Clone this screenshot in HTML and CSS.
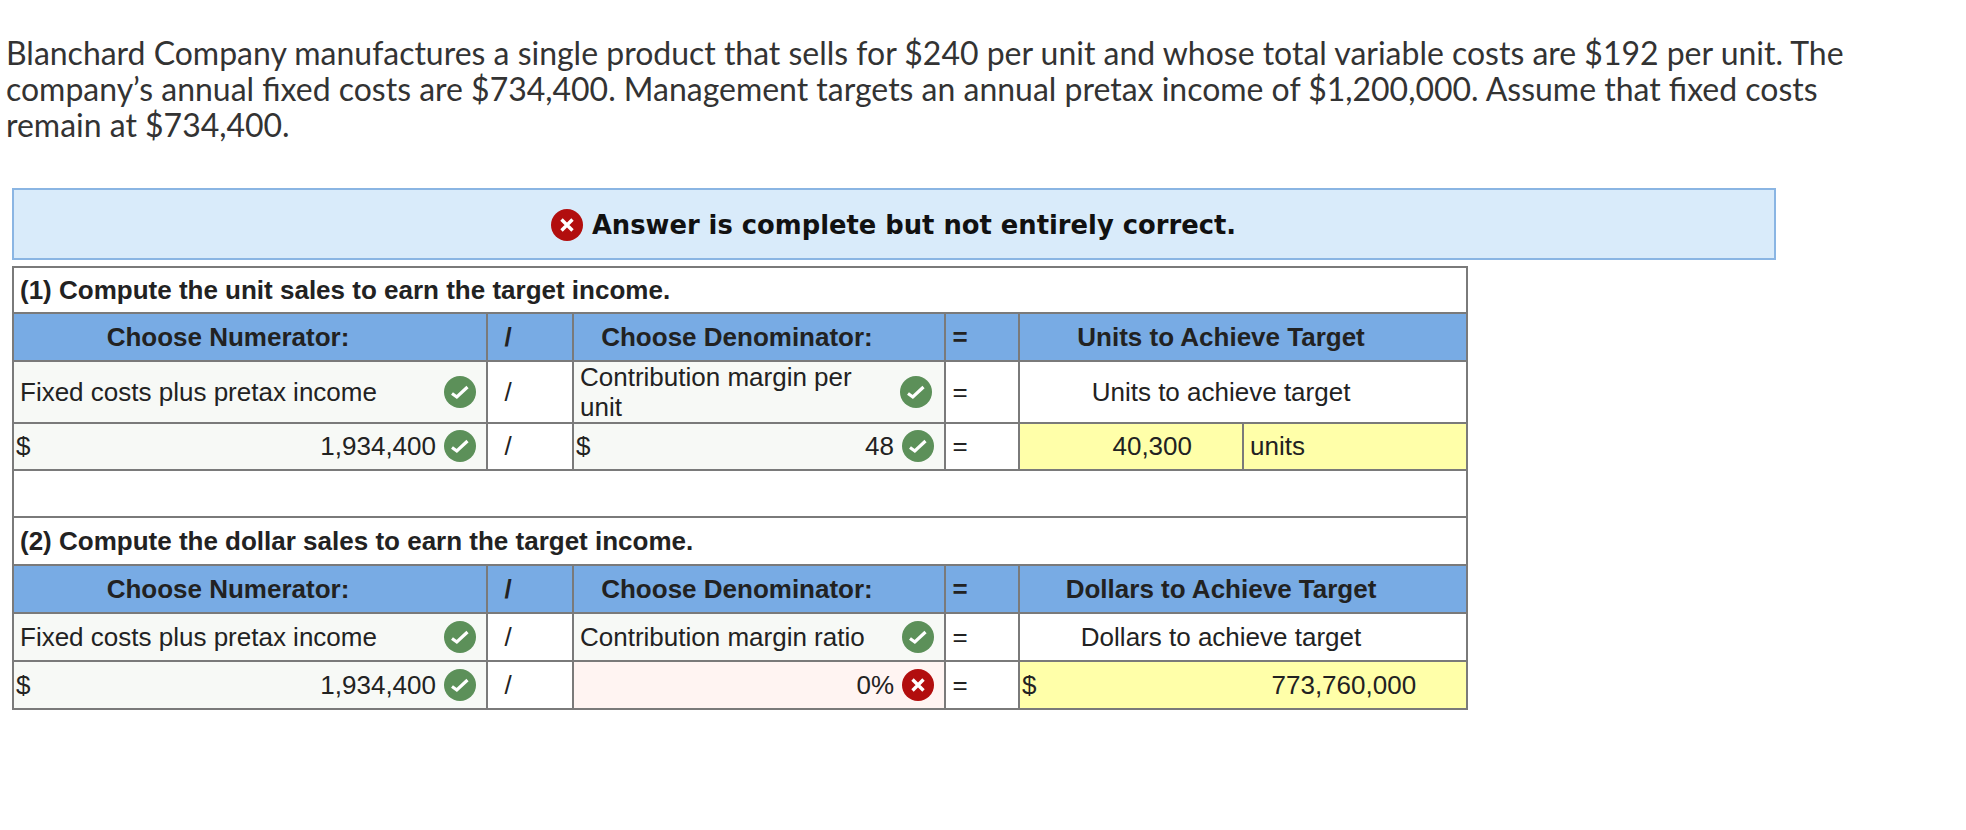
FILE: index.html
```html
<!DOCTYPE html>
<html lang="en">
<head>
<meta charset="utf-8">
<title>Blanchard Company</title>
<link rel="stylesheet" href="styles.css">
</head>
<body>
<svg class="defs" width="0" height="0" aria-hidden="true">
  <symbol id="ok" viewBox="0 0 32 32"><circle cx="16" cy="16" r="16" fill="#5c9059"/><path d="M8 17.500L12.800 21L23.500 11" fill="none" stroke="#fff" stroke-width="3.200"/></symbol>
  <symbol id="bad" viewBox="0 0 32 32"><circle cx="16" cy="16" r="16" fill="#b20e0e"/><path d="M10.500 10.500l11 11M21.500 10.500l-11 11" fill="none" stroke="#fff" stroke-width="3.400"/></symbol>
</svg>
<p class="intro">Blanchard Company manufactures a single product that sells for $240 per unit and whose total variable costs are $192 per unit. The company’s annual fixed costs are $734,400. Management targets an annual pretax income of $1,200,000. Assume that fixed costs remain at $734,400.</p>
<div class="banner"><svg class="icon"><use href="#bad"/></svg><strong>Answer is complete but not entirely correct.</strong></div>
<table class="sheet">
  <colgroup>
    <col class="c-num"><col class="c-op1"><col class="c-den"><col class="c-op2"><col class="c-val"><col class="c-unit">
  </colgroup>
  <tbody>
    <tr class="r-title"><th colspan="6" class="title">(1) Compute the unit sales to earn the target income.</th></tr>
    <tr class="r-head">
      <th class="mid">Choose Numerator:</th><th class="mid">/</th><th class="mid">Choose Denominator:</th><th class="mid">=</th><th colspan="2" class="mid">Units to Achieve Target</th>
    </tr>
    <tr class="r-tall">
      <td class="given"><div class="fill"><span>Fixed costs plus pretax income</span><svg class="icon"><use href="#ok"/></svg></div></td>
      <td class="mid">/</td>
      <td class="given"><div class="fill"><span class="wrap">Contribution margin per unit</span><svg class="icon"><use href="#ok"/></svg></div></td>
      <td class="mid">=</td>
      <td colspan="2" class="mid">Units to achieve target</td>
    </tr>
    <tr class="r-row">
      <td class="given dollar"><div class="fill"><span>$</span><span class="amount">1,934,400</span><svg class="icon"><use href="#ok"/></svg></div></td>
      <td class="mid">/</td>
      <td class="given dollar"><div class="fill"><span>$</span><span class="amount">48</span><svg class="icon"><use href="#ok"/></svg></div></td>
      <td class="mid">=</td>
      <td class="answer num">40,300</td>
      <td class="answer">units</td>
    </tr>
    <tr class="r-gap"><td colspan="6"></td></tr>
    <tr class="r-title2"><th colspan="6" class="title">(2) Compute the dollar sales to earn the target income.</th></tr>
    <tr class="r-head">
      <th class="mid">Choose Numerator:</th><th class="mid">/</th><th class="mid">Choose Denominator:</th><th class="mid">=</th><th colspan="2" class="mid">Dollars to Achieve Target</th>
    </tr>
    <tr class="r-row2">
      <td class="given"><div class="fill"><span>Fixed costs plus pretax income</span><svg class="icon"><use href="#ok"/></svg></div></td>
      <td class="mid">/</td>
      <td class="given"><div class="fill"><span>Contribution margin ratio</span><svg class="icon"><use href="#ok"/></svg></div></td>
      <td class="mid">=</td>
      <td colspan="2" class="mid">Dollars to achieve target</td>
    </tr>
    <tr class="r-row2">
      <td class="given dollar"><div class="fill"><span>$</span><span class="amount">1,934,400</span><svg class="icon"><use href="#ok"/></svg></div></td>
      <td class="mid">/</td>
      <td class="wrong dollar"><div class="fill"><span class="amount">0%</span><svg class="icon"><use href="#bad"/></svg></div></td>
      <td class="mid">=</td>
      <td colspan="2" class="answer dollar"><div class="fill"><span>$</span><span class="amount pad-end">773,760,000</span></div></td>
    </tr>
  </tbody>
</table>
</body>
</html>
```

FILE: styles.css
```css
html, body {
  margin: 0;
  padding: 0;
  background: #fff;
}
body {
  padding: 0 0 0 6px;
  height: 830px;
  overflow: hidden;
  box-sizing: border-box;
}
.defs {
  position: absolute;
}
.intro {
  margin: 0;
  padding-top: 35px;
  width: 1850px;
  font-family: Lato, "Open Sans", sans-serif;
  font-size: 31.970px;
  line-height: 36px;
  color: #333;
}
.banner {
  box-sizing: border-box;
  margin: 45px 0 0 6px;
  width: 1764px;
  height: 72px;
  padding: 2px 1px 0 0;
  border: 2px solid #8ab5e3;
  background: #d9ebfa;
  display: flex;
  align-items: center;
  justify-content: center;
  gap: 9px;
  font-family: "DejaVu Sans", sans-serif;
  font-size: 25.800px;
  color: #111;
}
.banner strong {
  font-weight: 700;
}
.icon {
  width: 32px;
  height: 32px;
  flex: none;
  display: block;
}
.sheet {
  margin: 6px 0 0 6px;
  border-collapse: collapse;
  table-layout: fixed;
  width: 1454px;
  font-family: "Liberation Sans", Arial, sans-serif;
  font-size: 26px;
  line-height: 30px;
  color: #222;
}
.c-num { width: 474px; }
.c-op1 { width: 86px; }
.c-den { width: 372px; }
.c-op2 { width: 74px; }
.c-val { width: 224px; }
.c-unit { width: 224px; }
.sheet th,
.sheet td {
  border: 2px solid #7a7a7a;
  padding: 0 0 1px 6px;
  vertical-align: middle;
  text-align: left;
  box-sizing: border-box;
}
.sheet th {
  font-weight: 700;
}
.r-title { height: 46px; }
.r-row { height: 47px; }
.r-head, .r-title2, .r-row2 { height: 48px; }
.r-gap { height: 47px; }
.r-tall { height: 61px; }
.r-head th {
  background: #78abe4;
}
.sheet .title {
  background: #fff;
}
.sheet .mid {
  text-align: center;
  padding: 0 44px 1px 0;
}
.sheet .given {
  background: #f7f9f6;
  padding-right: 10px;
}
.sheet .r-tall .given {
  padding-bottom: 0;
}
.sheet .wrong {
  background: #fff4f2;
  padding-right: 10px;
}
.sheet .answer {
  background: #ffffa9;
}
.sheet .num {
  text-align: right;
  padding: 0 50px 1px 0;
}
.sheet .dollar {
  padding-left: 2px;
}
.fill {
  display: flex;
  align-items: center;
}
.fill > span:first-child {
  flex: 1;
}
.fill .amount {
  flex: 1;
  text-align: right;
  padding-right: 8px;
}
.fill .pad-end {
  padding-right: 50px;
}
.wrap {
  max-width: 280px;
  padding-right: 40px;
}
```
